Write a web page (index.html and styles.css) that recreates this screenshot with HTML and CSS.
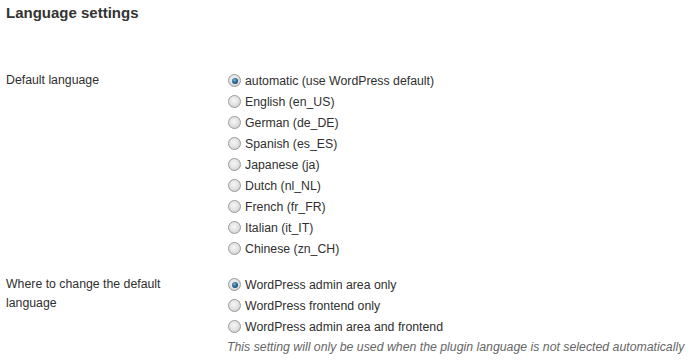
FILE: index.html
```html
<!DOCTYPE html>
<html lang="en">
<head>
  <meta charset="UTF-8">
  <title>Language settings</title>
  <link rel="stylesheet" href="styles.css">
</head>

<body>
  <h3 class="section-title">Language settings</h3>

  <div class="settings">
    <!-- Default language -->
    <div class="row">
      <div class="label">Default language</div>
      <div class="options">
        <label class="option"><input type="radio" name="lang" checked> automatic (use WordPress default)</label>
        <label class="option"><input type="radio" name="lang"> English (en_US)</label>
        <label class="option"><input type="radio" name="lang"> German (de_DE)</label>
        <label class="option"><input type="radio" name="lang"> Spanish (es_ES)</label>
        <label class="option"><input type="radio" name="lang"> Japanese (ja)</label>
        <label class="option"><input type="radio" name="lang"> Dutch (nl_NL)</label>
        <label class="option"><input type="radio" name="lang"> French (fr_FR)</label>
        <label class="option"><input type="radio" name="lang"> Italian (it_IT)</label>
        <label class="option"><input type="radio" name="lang"> Chinese (zn_CH)</label>
      </div>
    </div>

    <!-- Where to change -->
    <div class="row">
      <div class="label">Where to change the default language</div>
      <div class="options">
        <label class="option"><input type="radio" name="where" checked> WordPress admin area only</label>
        <label class="option"><input type="radio" name="where"> WordPress frontend only</label>
        <label class="option"><input type="radio" name="where"> WordPress admin area and frontend</label>
        <span class="description">This setting will only be used when the plugin language is not selected automatically</span>
      </div>
    </div>
  </div>
</body>
</html>
```

FILE: styles.css
```css
body {
  font-family: "Liberation Sans", Arial, sans-serif;
  font-size: 12.3px;
  color: #2f2f2f;
  background: #fff;
  margin: 0;
  padding: 0 6px;
}

.section-title {
  font-size: 15px;
  line-height: 20px;
  font-weight: bold;
  color: #333;
  margin: 3px 0 0;
}

.settings {
  margin-top: 47px;
}

.row {
  display: grid;
  grid-template-columns: 221px 1fr;
  margin-bottom: 15px;
}

.label {
  width: 180px;
  line-height: 19px;
  padding-top: 1px;
}

.options {
  display: flex;
  flex-direction: column;
}

.option {
  display: flex;
  align-items: center;
  height: 21px;
  gap: 4px;
}

.option input {
  appearance: none;
  -webkit-appearance: none;
  width: 13px;
  height: 13px;
  margin: 0 0 0 1px;
  border: 1px solid #9a9a9a;
  border-radius: 50%;
  background: radial-gradient(circle at 45% 40%, #f6f6f6 0%, #e2e2e2 50%, #c4c4c4 100%);
  position: relative;
}

.option input:checked::after {
  content: "";
  position: absolute;
  left: 2.5px;
  top: 2.5px;
  width: 6px;
  height: 6px;
  border-radius: 50%;
  background: radial-gradient(circle at 40% 35%, #7ab2d4 0%, #1f5f88 55%, #133e5c 100%);
}

.description {
  font-style: italic;
  color: #666;
  line-height: 21px;
}
```
